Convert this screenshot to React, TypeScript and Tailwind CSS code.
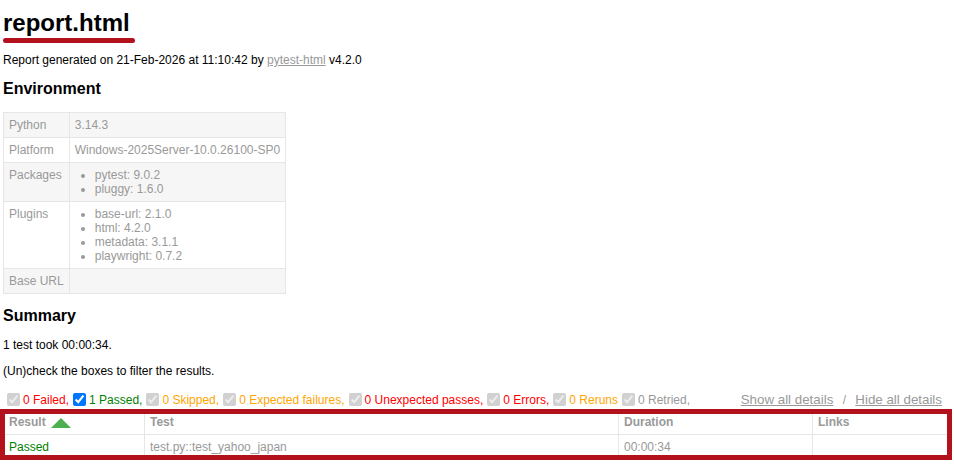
import React from "react";

type Row = { label: string; value?: string; list?: string[] };

const envRows: Row[] = [
  { label: "Python", value: "3.14.3" },
  { label: "Platform", value: "Windows-2025Server-10.0.26100-SP0" },
  { label: "Packages", list: ["pytest: 9.0.2", "pluggy: 1.6.0"] },
  { label: "Plugins", list: ["base-url: 2.1.0", "html: 4.2.0", "metadata: 3.1.1", "playwright: 0.7.2"] },
  { label: "Base URL", value: "" },
];

type Filter = { text: string; cls: string; enabled?: boolean };

const filters: Filter[] = [
  { text: "0 Failed,", cls: "text-[#ff0000]" },
  { text: "1 Passed,", cls: "text-[#008000]", enabled: true },
  { text: "0 Skipped,", cls: "text-[#ffa500]" },
  { text: "0 Expected failures,", cls: "text-[#ffa500]" },
  { text: "0 Unexpected passes,", cls: "text-[#ff0000]" },
  { text: "0 Errors,", cls: "text-[#ff0000]" },
  { text: "0 Reruns", cls: "text-[#ffa500]" },
  { text: "0 Retried,", cls: "text-[#999999]" },
];

export default function App() {
  return (
    <div className="relative min-h-[467px] bg-white px-[3px] font-['Liberation_Sans',Arial,sans-serif] text-[12px] leading-[14px] text-[#999999]">
      <h1 className="pt-[9px] text-[24px] leading-[28px] font-bold text-black">report.html</h1>
      <div className="pointer-events-none absolute left-[3px] top-[38px] h-[5px] w-[132px] rounded-full bg-[#b3121d]" />
      <p className="mt-[16px] text-black">
        Report generated on 21-Feb-2026 at 11:10:42 by{" "}
        <a className="text-[#999999] underline">pytest-html</a> v4.2.0
      </p>
      <h2 className="mt-[13px] text-[16px] leading-[18px] font-bold text-black">Environment</h2>
      <table className="mt-[14px] border-collapse">
        <tbody>
          {envRows.map((r, i) => (
            <tr key={r.label} className={i % 2 === 0 ? "bg-[#f6f6f6]" : "bg-white"}>
              <td className="border border-[#e6e6e6] p-[5px] align-top">{r.label}</td>
              <td className="border border-[#e6e6e6] p-[5px] align-top">
                {r.list ? (
                  <ul className="list-disc pl-[20px]">
                    {r.list.map((l) => (
                      <li key={l}>{l}</li>
                    ))}
                  </ul>
                ) : (
                  r.value
                )}
              </td>
            </tr>
          ))}
        </tbody>
      </table>
      <h2 className="mt-[13px] text-[16px] leading-[18px] font-bold text-black">Summary</h2>
      <p className="mt-[13px] text-black">1 test took 00:00:34.</p>
      <p className="mt-[12px] text-black">(Un)check the boxes to filter the results.</p>
      <div className="mt-[12px] flex items-center justify-between">
        <div className="flex items-center">
          {filters.map((f) => (
            <React.Fragment key={f.text}>
              <input
                type="checkbox"
                checked
                readOnly
                disabled={!f.enabled}
                className="m-[3px_3px_3px_4px] h-[13px] w-[13px]"
              />
              <span className={f.cls}>{f.text}</span>
            </React.Fragment>
          ))}
        </div>
        <div className="flex items-center whitespace-pre pr-[3px]">
          <button className="px-[6px] py-[1px] text-[13.333px] leading-[15px] text-[#999999] underline">Show all details</button>
          <span>{"\u00a0/\u00a0"}</span>
          <button className="px-[6px] py-[1px] text-[13.333px] leading-[15px] text-[#999999] underline">Hide all details</button>
        </div>
      </div>
      <table className="w-full table-fixed border-collapse">
        <thead>
          <tr>
            <th className="w-[141px] border border-[#e6e6e6] p-[5px] text-left font-bold">
              Result
              <span className="relative top-[1.5px] ml-[5px] inline-block h-0 w-0 border-x-[10px] border-b-[10px] border-x-transparent border-b-[#4caf50]" />
            </th>
            <th className="w-[474px] border border-[#e6e6e6] p-[5px] text-left font-bold">Test</th>
            <th className="w-[194px] border border-[#e6e6e6] p-[5px] text-left font-bold">Duration</th>
            <th className="border border-[#e6e6e6] p-[5px] text-left font-bold">Links</th>
          </tr>
        </thead>
        <tbody>
          <tr>
            <td className="border border-[#e6e6e6] p-[5px] text-[#008000]">Passed</td>
            <td className="border border-[#e6e6e6] p-[5px]">test.py::test_yahoo_japan</td>
            <td className="border border-[#e6e6e6] p-[5px]">00:00:34</td>
            <td className="border border-[#e6e6e6] p-[5px]"></td>
          </tr>
        </tbody>
      </table>
      <div className="pointer-events-none absolute left-0 top-[409px] h-[51px] w-[952px] border-[5px] border-[#b3121d]" />
    </div>
  );
}
